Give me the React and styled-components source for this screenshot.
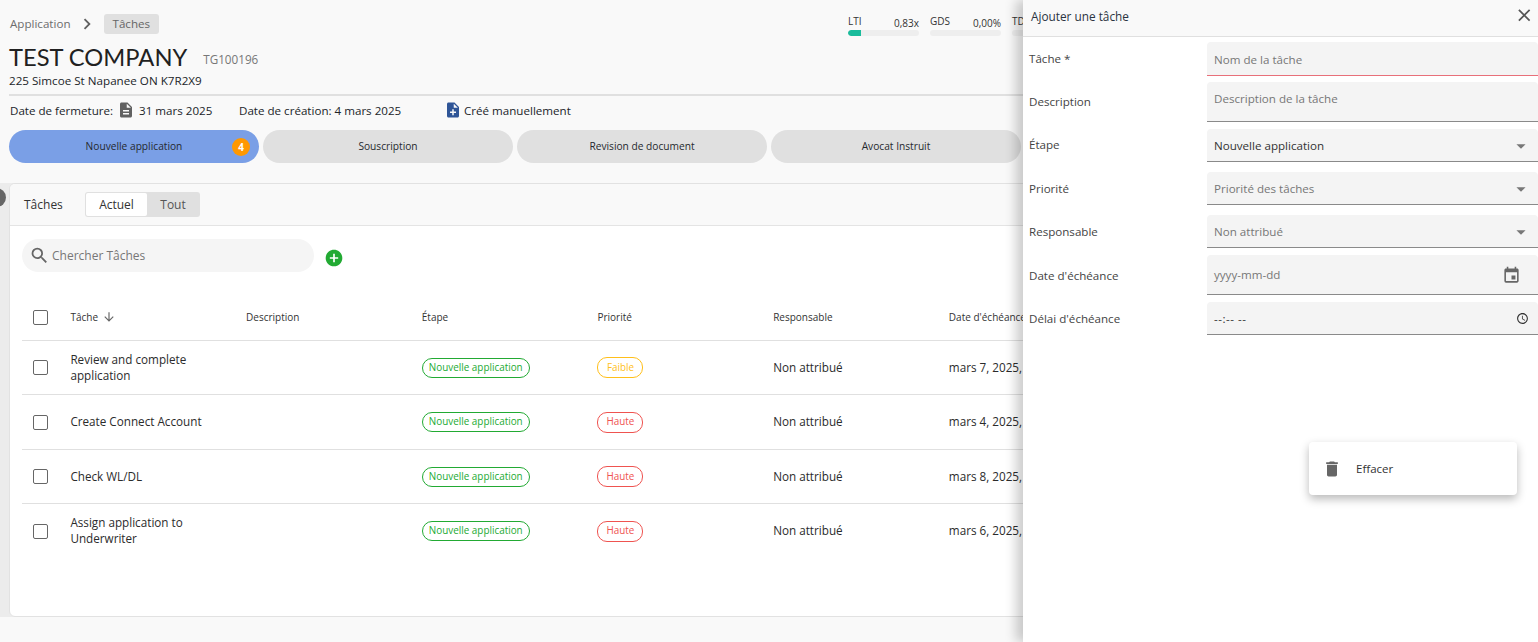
import React from "react";
import styled, { createGlobalStyle } from "styled-components";
import {
  MdDescription, MdNoteAdd, MdSearch, MdAddCircle, MdArrowDownward, MdClose,
  MdDelete, MdEvent, MdAccessTime, MdArrowDropDown, MdChevronRight,
} from "react-icons/md";

const Global = createGlobalStyle`
  html, body { margin: 0; padding: 0; height: 100%; overflow: hidden; background: #f9f9f9; }
  body { font-family: "Open Sans", "Noto Sans", sans-serif; color: #212529; }
  * { box-sizing: border-box; }
`;

const Page = styled.div`
  position: relative;
  width: 1538px;
  height: 642px;
  overflow: hidden;
  display: flex;
  flex-direction: column;
  background: #f9f9f9;
`;

const Header = styled.header`
  flex: none;
  height: 183px;
  display: flex;
  flex-direction: column;
  padding-left: 9px;
`;

const TopRow = styled.div`
  height: 45px;
  display: flex;
  align-items: flex-start;
  justify-content: space-between;
  padding-top: 14px;
`;

const Crumbs = styled.nav`
  display: flex;
  align-items: center;
  font-size: 11.6px;
  color: #6d6d6d;
  height: 20px;
  padding-left: 1px;
`;

const Crumb = styled.span`
  white-space: nowrap;
  padding-bottom: 2px;
`;

const CrumbSep = styled(MdChevronRight)`
  font-size: 22px;
  color: #616161;
  margin: 0 6px 0 5px;
`;

const CrumbChip = styled.span`
  background: #e0e0e0;
  border-radius: 3px;
  padding: 0 9px 1px;
  line-height: 19px;
  color: #666;
`;

const Metrics = styled.div`
  display: flex;
  gap: 11px;
  width: 690px;
`;

const Metric = styled.div`
  width: 71px;
  flex: none;
`;

const MetricText = styled.div`
  display: flex;
  justify-content: space-between;
  font-size: 10px;
  height: 16px;
  color: #333;
`;

const MetricLabel = styled.span`
  line-height: 14px;
`;

const MetricValue = styled.span`
  line-height: 18px;
`;

const Bar = styled.div`
  height: 6px;
  border-radius: 3px;
  background: #eeeeee;
  overflow: hidden;
`;

const BarFill = styled.div`
  height: 100%;
  background: #1abc9c;
  border-radius: 3px 0 0 3px;
`;

const TitleRow = styled.div`
  display: flex;
  align-items: center;
  height: 25px;
`;

const Title = styled.h1`
  margin: 0;
  font-family: "Lato", "Open Sans", sans-serif;
  font-weight: 400;
  font-size: 23.7px;
  line-height: 25px;
  color: #212121;
`;

const Code = styled.span`
  font-size: 11.7px;
  color: #777;
  margin: 2px 0 0 16px;
`;

const Address = styled.div`
  font-size: 11.65px;
  line-height: 18px;
  margin-top: 2px;
  height: 22px;
`;

const Divider = styled.hr`
  margin: 0;
  border: 0;
  flex: none;
  height: 2px;
  background: #e0e0e0;
`;

const InfoRow = styled.div`
  display: flex;
  align-items: center;
  height: 32px;
  padding-bottom: 4px;
  font-size: 11.6px;
  margin-left: 1px;
`;

const InfoText = styled.span`
  white-space: nowrap;
`;

const InfoGroup = styled.span`
  display: flex;
  align-items: center;
  width: ${(p) => p.$w}px;
  flex: none;
`;

const DocIcon = styled(MdDescription)`
  font-size: 18px;
  color: #616161;
  margin: 0 4px;
`;

const NewDocIcon = styled(MdNoteAdd)`
  font-size: 18px;
  color: #2f5597;
  margin-right: 2px;
`;

const Steps = styled.div`
  display: flex;
  gap: 4px;
  margin-top: 2px;
`;

const Step = styled.div`
  position: relative;
  width: 250px;
  height: 33px;
  flex: none;
  border-radius: 17px;
  background: ${(p) => (p.$active ? "#7a9fe6" : "#e0e0e0")};
  display: flex;
  align-items: center;
  justify-content: center;
  padding-bottom: 2px;
  font-size: 10.2px;
  color: #26292e;
`;

const StepBadge = styled.span`
  position: absolute;
  right: 9px;
  top: 8px;
  width: 18px;
  height: 18px;
  border-radius: 50%;
  background: #ff9800;
  color: #fff;
  font-size: 10px;
  font-weight: 700;
  display: flex;
  align-items: center;
  justify-content: center;
`;

const Body = styled.main`
  flex: 1;
  padding-bottom: 25px;
  display: flex;
  min-height: 0;
`;

const Shelf = styled.div`
  flex: 1;
  display: flex;
  background: #ececec;
  padding-left: 9px;
  min-width: 0;
`;

const Card = styled.section`
  flex: 1;
  background: #fff;
  border: 1px solid #e2e2e2;
  border-radius: 6px;
  overflow: hidden;
`;

const CardHead = styled.div`
  height: 42px;
  background: #f9f9f9;
  border-bottom: 1px solid #e4e4e4;
  display: flex;
  align-items: center;
  padding-left: 14px;
  font-size: 12px;
  color: #333;
`;

const CardTitle = styled.span`
  width: 61px;
`;

const Toggle = styled.div`
  display: flex;
  background: #e0e0e0;
  border-radius: 3px;
  padding: 1px;
  height: 25px;
`;

const ToggleItem = styled.span`
  width: ${(p) => (p.$active ? 61 : 52)}px;
  display: flex;
  align-items: center;
  justify-content: center;
  background: ${(p) => (p.$active ? "#fff" : "transparent")};
  border-radius: 2px;
  font-size: 12px;
  color: ${(p) => (p.$active ? "#333" : "#555")};
`;

const SearchRow = styled.div`
  display: flex;
  align-items: flex-start;
  padding: 13px 0 0 12px;
  height: 70px;
`;

const Search = styled.div`
  width: 292px;
  height: 33px;
  background: #f5f5f5;
  border-radius: 17px;
  display: flex;
  align-items: center;
  padding-left: 7px;
  font-size: 12px;
  color: #777;
`;

const SearchIcon = styled(MdSearch)`
  font-size: 21px;
  color: #666;
  margin-right: 2px;
`;

const AddIcon = styled(MdAddCircle)`
  font-size: 20px;
  color: #22aa33;
  margin: 9px 0 0 10px;
`;

const TableRow = styled.div`
  display: grid;
  grid-template-columns: 48.4px repeat(6, 175.7px);
  align-items: center;
  margin-left: 12px;
  height: ${(p) => p.$h}px;
  padding-bottom: ${(p) => p.$pb || 0}px;
  border-bottom: ${(p) => (p.$last ? "0" : "1px solid #e0e0e0")};
`;

const Check = styled.span`
  width: 15px;
  height: 15px;
  margin-left: 11px;
  border: 1px solid #666;
  border-radius: 2px;
  background: #fff;
`;

const HeadCell = styled.div`
  font-size: 10px;
  color: #333;
  display: flex;
  align-items: center;
  gap: 4px;
  padding-bottom: 2px;
  white-space: nowrap;
`;

const SortIcon = styled(MdArrowDownward)`
  font-size: 14px;
  color: #666;
`;

const Cell = styled.div`
  font-size: 11.7px;
  line-height: 16px;
  color: #2b2b2b;
  padding: 0 30px 2px 0;
  white-space: ${(p) => (p.$nowrap ? "nowrap" : "normal")};
`;

const TagCell = styled.div`
  display: flex;
  align-items: center;
`;

const Tag = styled.span`
  display: inline-flex;
  align-items: center;
  justify-content: center;
  height: ${(p) => (p.$wide ? 20 : 21)}px;
  min-width: ${(p) => (p.$wide ? 108 : 46)}px;
  padding-bottom: 2px;
  border: 1px solid ${(p) => p.$color};
  color: ${(p) => p.$color};
  border-radius: 10px;
  font-size: 9.9px;
  white-space: nowrap;
`;

const Drawer = styled.aside`
  position: absolute;
  top: 0;
  left: 1023px;
  width: 515px;
  height: 642px;
  background: #fff;
  box-shadow: -7px 0 11px rgba(0, 0, 0, 0.2);
`;

const DrawerHead = styled.div`
  height: 37px;
  background: #f9f9f9;
  border-bottom: 1px solid #e0e0e0;
  display: flex;
  align-items: center;
  justify-content: space-between;
  padding: 0 4px 5px 8px;
  font-size: 11.8px;
  color: #2b3440;
`;

const CloseIcon = styled(MdClose)`
  font-size: 20.5px;
  color: #555;
`;

const Form = styled.div`
  padding-left: 6px;
`;

const FormRow = styled.div`
  display: grid;
  grid-template-columns: 178px 1fr;
  margin-top: ${(p) => p.$mt}px;
`;

const FormLabel = styled.label`
  font-size: 11.6px;
  color: #444;
  padding-top: ${(p) => p.$pt}px;
  line-height: 16px;
`;

const Field = styled.div`
  height: ${(p) => p.$h}px;
  background: #f4f4f4;
  border-radius: 4px 4px 0 0;
  border-bottom: 1px solid ${(p) => (p.$error ? "#e8707a" : "#8a8a8a")};
  display: flex;
  align-items: ${(p) => (p.$top ? "flex-start" : "center")};
  justify-content: space-between;
  padding: ${(p) => (p.$top ? "9px" : p.$error ? "3px" : "1px")} 7px 0;
  font-size: 11.6px;
  line-height: 16px;
  letter-spacing: ${(p) => (p.$spaced ? "0.5px" : "0")};
  color: ${(p) => (p.$value ? "#333" : "#777")};
`;

const DropIcon = styled(MdArrowDropDown)`
  font-size: 22px;
  color: #777;
  margin-right: -1px;
`;

const CalIcon = styled(MdEvent)`
  font-size: 19px;
  color: #666;
  margin-right: 10px;
`;

const ClockIcon = styled(MdAccessTime)`
  font-size: 13px;
  color: #333;
  margin-right: 2px;
`;

const Menu = styled.div`
  position: absolute;
  left: 1309px;
  top: 442px;
  width: 208px;
  height: 53px;
  background: #fff;
  border-radius: 4px;
  box-shadow: 0 4px 10px rgba(0, 0, 0, 0.28);
  display: flex;
  align-items: center;
  padding-left: 13px;
  font-size: 11.5px;
  color: #333;
`;

const TrashIcon = styled(MdDelete)`
  font-size: 20px;
  color: #666;
  margin-right: 14px;
`;

const Handle = styled.span`
  position: absolute;
  left: -13px;
  top: 188px;
  width: 19px;
  height: 19px;
  border-radius: 50%;
  background: #666;
`;

const metrics = [
  { label: "LTI", value: "0,83x", fill: 18 },
  { label: "GDS", value: "0,00%", fill: 0 },
  { label: "TD", fill: 0 },
];

const steps = [
  { name: "Nouvelle application", active: true, badge: 4 },
  { name: "Souscription" },
  { name: "Revision de document" },
  { name: "Avocat Instruit" },
];

const PRIORITY = { Faible: "#ffbf1a", Haute: "#ef5350" };

const rows = [
  { task: "Review and complete application", pri: "Faible", date: "mars 7, 2025,", h: 54 },
  { task: "Create Connect Account", pri: "Haute", date: "mars 4, 2025,", h: 55 },
  { task: "Check WL/DL", pri: "Haute", date: "mars 8, 2025,", h: 54 },
  { task: "Assign application to Underwriter", pri: "Haute", date: "mars 6, 2025,", h: 54, last: true },
];

const fields = [
  { label: "Tâche *", text: "Nom de la tâche", h: 34, mt: 5, pt: 9, error: true },
  { label: "Description", text: "Description de la tâche", h: 40, mt: 6, pt: 12, top: true },
  { label: "Étape", text: "Nouvelle application", h: 33, mt: 7, pt: 8, value: true, icon: <DropIcon /> },
  { label: "Priorité", text: "Priorité des tâches", h: 33, mt: 10, pt: 9, icon: <DropIcon /> },
  { label: "Responsable", text: "Non attribué", h: 33, mt: 10, pt: 9, icon: <DropIcon /> },
  { label: "Date d'échéance", text: "yyyy-mm-dd", h: 40, mt: 7, pt: 13, icon: <CalIcon /> },
  { label: "Délai d'échéance", text: "--:-- --", h: 33, mt: 7, pt: 9, value: true, spaced: true, icon: <ClockIcon /> },
];

export default function App() {
  return (
    <Page>
      <Global />
      <Header>
        <TopRow>
          <Crumbs>
            <Crumb>Application</Crumb>
            <CrumbSep />
            <CrumbChip>Tâches</CrumbChip>
          </Crumbs>
          <Metrics>
            {metrics.map((m) => (
              <Metric key={m.label}>
                <MetricText>
                  <MetricLabel>{m.label}</MetricLabel>
                  {m.value && <MetricValue>{m.value}</MetricValue>}
                </MetricText>
                <Bar>
                  <BarFill style={{ width: `${m.fill}%` }} />
                </Bar>
              </Metric>
            ))}
          </Metrics>
        </TopRow>
        <TitleRow>
          <Title>TEST COMPANY</Title>
          <Code>TG100196</Code>
        </TitleRow>
        <Address>225 Simcoe St Napanee ON K7R2X9</Address>
        <Divider />
        <InfoRow>
          <InfoGroup $w={229}>
            <InfoText>Date de fermeture:</InfoText>
            <DocIcon />
            <InfoText>31 mars 2025</InfoText>
          </InfoGroup>
          <InfoGroup $w={205}>
            <InfoText>Date de création: 4 mars 2025</InfoText>
          </InfoGroup>
          <InfoGroup $w={200}>
            <NewDocIcon />
            <InfoText>Créé manuellement</InfoText>
          </InfoGroup>
        </InfoRow>
        <Steps>
          {steps.map((s) => (
            <Step key={s.name} $active={s.active}>
              {s.name}
              {s.badge && <StepBadge>{s.badge}</StepBadge>}
            </Step>
          ))}
        </Steps>
      </Header>
      <Body>
        <Shelf>
          <Card>
            <CardHead>
              <CardTitle>Tâches</CardTitle>
              <Toggle>
                <ToggleItem $active>Actuel</ToggleItem>
                <ToggleItem>Tout</ToggleItem>
              </Toggle>
            </CardHead>
            <SearchRow>
              <Search>
                <SearchIcon />
                Chercher Tâches
              </Search>
              <AddIcon />
            </SearchRow>
            <TableRow $h={45} $pb={1}>
              <Check />
              <HeadCell>Tâche <SortIcon /></HeadCell>
              <HeadCell>Description</HeadCell>
              <HeadCell>Étape</HeadCell>
              <HeadCell>Priorité</HeadCell>
              <HeadCell>Responsable</HeadCell>
              <HeadCell>Date d'échéance</HeadCell>
            </TableRow>
            {rows.map((r) => (
              <TableRow key={r.task} $h={r.h} $last={r.last}>
                <Check />
                <Cell>{r.task}</Cell>
                <Cell />
                <TagCell><Tag $color="#22aa33" $wide>Nouvelle application</Tag></TagCell>
                <TagCell><Tag $color={PRIORITY[r.pri]}>{r.pri}</Tag></TagCell>
                <Cell $nowrap>Non attribué</Cell>
                <Cell $nowrap>{r.date}</Cell>
              </TableRow>
            ))}
          </Card>
        </Shelf>
      </Body>
      <Handle />
      <Drawer>
        <DrawerHead>
          Ajouter une tâche
          <CloseIcon />
        </DrawerHead>
        <Form>
          {fields.map((f) => (
            <FormRow key={f.label} $mt={f.mt}>
              <FormLabel $pt={f.pt}>{f.label}</FormLabel>
              <Field $h={f.h} $error={f.error} $top={f.top} $value={f.value} $spaced={f.spaced}>
                {f.text}
                {f.icon}
              </Field>
            </FormRow>
          ))}
        </Form>
      </Drawer>
      <Menu>
        <TrashIcon />
        Effacer
      </Menu>
    </Page>
  );
}
